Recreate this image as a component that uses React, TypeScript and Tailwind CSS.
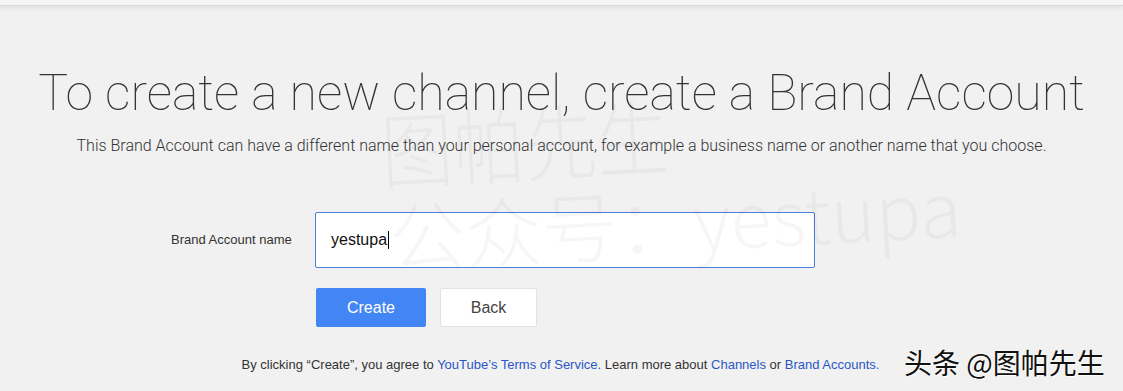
export default function App() {
  return (
    <div className="relative w-[1123px] h-[391px] overflow-hidden bg-[#f1f1f1] font-['Roboto',sans-serif]">
      {/* top strip */}
      <div className="h-[6px] bg-[#f5f5f5] border-b border-[#d9d9d9] shadow-[0_2px_5px_rgba(0,0,0,0.08)]" />

      <h1 className="mt-[59px] text-center text-[50px] leading-[56px] font-thin text-[#333]">
        To create a new channel, create a Brand Account
      </h1>
      <p className="mt-[15px] text-center text-[16px] leading-[20px] font-light text-[#333]">
        This Brand Account can have a different name than your personal account, for example a business name or another name that you choose.
      </p>

      <div className="mt-[56px] pl-[171px] font-['Liberation_Sans',Arial,sans-serif]">
        <div className="flex items-center">
          <label className="w-[144px] text-[13px] text-[#333]">Brand Account name</label>
          <div className="w-[500px] h-[56px] bg-white border border-[#4d7fdc] rounded-[2px] flex items-center px-[15px] text-[16px] text-[#111]">
            yestupa<span className="inline-block w-[1px] h-[18px] bg-black ml-[1px]" />
          </div>
        </div>
        <div className="flex gap-[14px] mt-[20px] ml-[145px]">
          <button className="w-[110px] h-[39px] bg-[#4285f4] text-white text-[16px] rounded-[2px]">Create</button>
          <button className="w-[97px] h-[39px] bg-white border border-[#e2e2e2] text-[#444] text-[16px] rounded-[2px]">Back</button>
        </div>
      </div>

      <p className="mt-[28px] text-center text-[13px] text-[#333] font-['Liberation_Sans',Arial,sans-serif] pr-[2px]">
        By clicking “Create”, you agree to <a className="text-[#2a56c6]">YouTube’s Terms of Service.</a> Learn more about <a className="text-[#2a56c6]">Channels</a> or <a className="text-[#2a56c6]">Brand Accounts.</a>
      </p>

      {/* faint watermark */}
      <div className="pointer-events-none absolute left-[383px] top-[106px] -rotate-[3deg] origin-left text-black/[0.035] font-['Noto_Sans_CJK_SC',sans-serif] font-light whitespace-nowrap">
        <div className="text-[72px] leading-none scale-y-[1.15] origin-top">图帕先生</div>
        <div className="mt-[18px] ml-[4px] text-[76px] leading-none">公众号：yestupa</div>
      </div>

      {/* corner watermark */}
      <div className="pointer-events-none absolute left-[904px] top-[348px] text-[28px] leading-none text-[#111] font-['Noto_Sans_CJK_SC',sans-serif] [text-shadow:0_0_2px_#fff,1px_1px_0_#fff] whitespace-nowrap">
        头条 @图帕先生
      </div>
    </div>
  )
}
